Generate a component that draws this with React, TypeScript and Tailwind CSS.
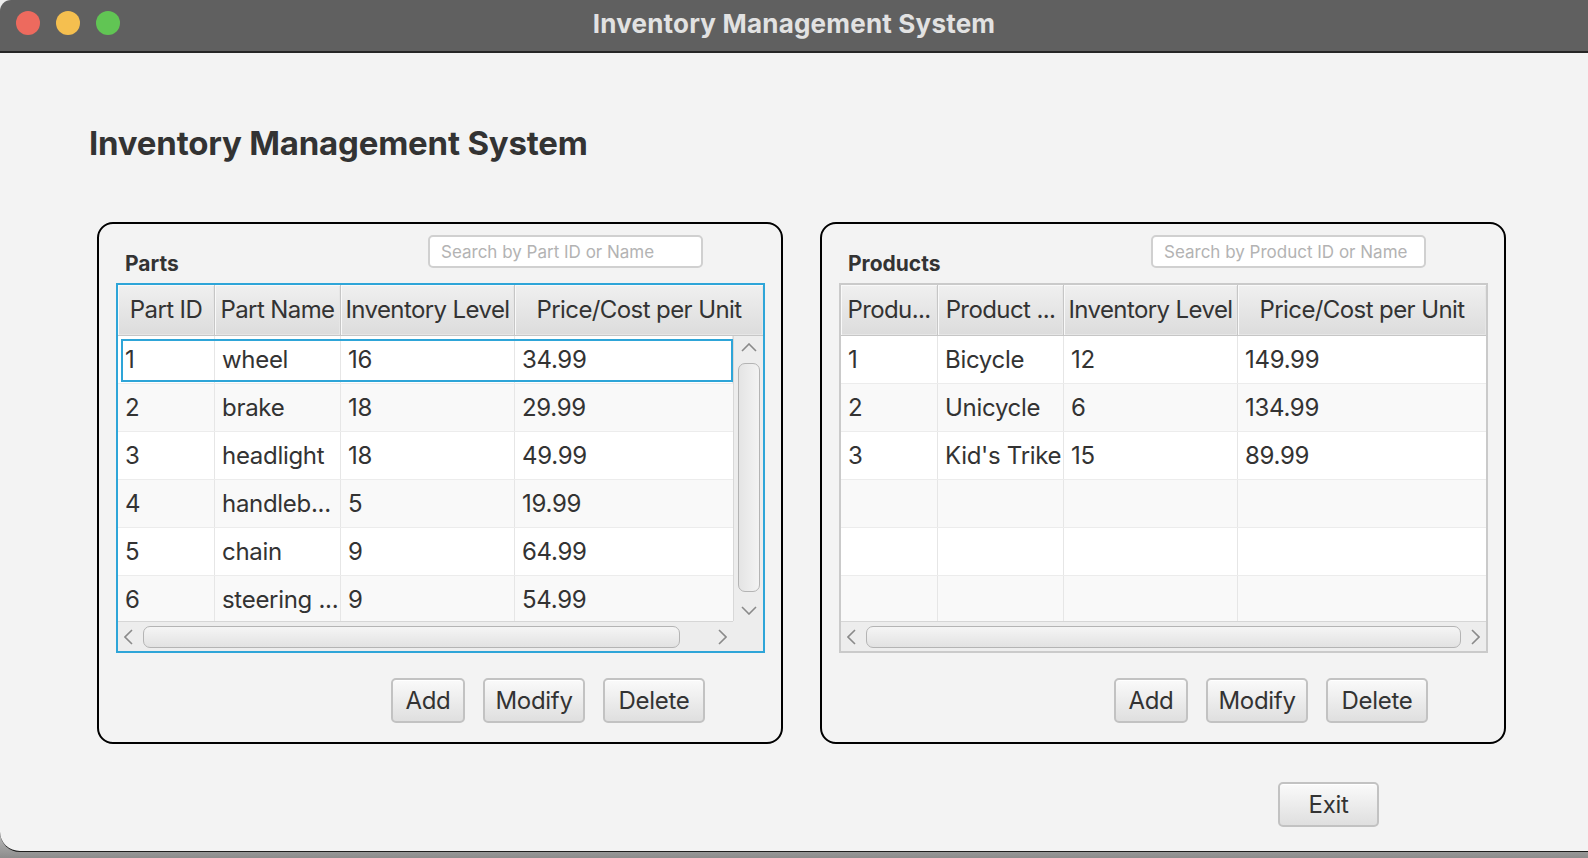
import React from 'react';

const FONT = "font-['Inter','Noto_Sans',sans-serif]";

type Row = string[];

const PARTS: Row[] = [
  ['1', 'wheel', '16', '34.99'],
  ['2', 'brake', '18', '29.99'],
  ['3', 'headlight', '18', '49.99'],
  ['4', 'handleb...', '5', '19.99'],
  ['5', 'chain', '9', '64.99'],
  ['6', 'steering ...', '9', '54.99'],
];

const PRODUCTS: Row[] = [
  ['1', 'Bicycle', '12', '149.99'],
  ['2', 'Unicycle', '6', '134.99'],
  ['3', "Kid's Trike", '15', '89.99'],
  ['', '', '', ''],
  ['', '', '', ''],
  ['', '', '', ''],
];

// fixed column widths, last column takes the rest
const COLS = ['w-[97px]', 'w-[126px]', 'w-[174px]'];

const Chevron = ({ dir }: { dir: 'up' | 'down' | 'left' | 'right' }) => {
  const pts = {
    up: '1,8 8,1 15,8',
    down: '1,1 8,8 15,1',
    left: '8,1 1,8 8,15',
    right: '1,1 8,8 1,15',
  }[dir];
  const vertical = dir === 'up' || dir === 'down';
  return (
    <svg
      width={vertical ? 16 : 9}
      height={vertical ? 9 : 16}
      viewBox={vertical ? '0 0 16 9' : '0 0 9 16'}
      className="shrink-0"
    >
      <polyline points={pts} fill="none" stroke="#8a8a8a" strokeWidth="1.6" />
    </svg>
  );
};

const Button = ({ label, w }: { label: string; w: string }) => (
  <button
    className={`${w} h-[45px] rounded-[5px] border-2 border-[#c2c2c2] bg-gradient-to-b from-[#fafafa] to-[#dfdfdf] text-[24px] leading-none text-[#333333] tracking-[-0.3px] shadow-[inset_0_1px_0_#ffffff]`}
  >
    {label}
  </button>
);

const HScroll = ({ thumb }: { thumb?: string }) => (
  <div className="h-[30px] flex items-center gap-[10px] px-[6px] bg-[#ededed] border-t border-[#d6d6d6]">
    <Chevron dir="left" />
    <div className="flex-1 flex">
      <div
        className={`${thumb ?? 'flex-1'} h-[22px] rounded-[7px] border border-[#b4b4b4] bg-gradient-to-b from-[#f5f5f5] to-[#e2e2e2]`}
      />
    </div>
    <Chevron dir="right" />
  </div>
);

const Table = ({
  headers,
  rows,
  focused,
}: {
  headers: string[];
  rows: Row[];
  focused?: boolean;
}) => (
  <div
    className={`w-[649px] h-[370px] flex flex-col border-2 ${
      focused ? 'border-[#2ea5d8]' : 'border-[#cacaca]'
    } bg-[#f4f4f4]`}
  >
    {/* header */}
    <div className="h-[51px] flex border-b border-[#c6c6c6] shrink-0">
      {headers.map((h, i) => (
        <div
          key={i}
          className={`${i < 3 ? COLS[i] : 'flex-1'} h-full flex items-center justify-center whitespace-nowrap overflow-hidden border-r border-[#c6c6c6] last:border-r-0 bg-gradient-to-b from-[#f0f0f0] to-[#dcdcdc] shadow-[inset_1px_1px_0_#f9f9f9,inset_-1px_-1px_0_#e6e6e6] text-[24px] text-[#333333] tracking-[-0.6px]`}
        >
          {h}
        </div>
      ))}
    </div>

    {/* body */}
    <div className="flex-1 flex min-h-0">
      <div className="flex-1 flex flex-col min-w-0">
        <div className="flex-1 overflow-hidden bg-white">
          {rows.map((r, ri) => (
            <div
              key={ri}
              className={`relative h-[48px] flex shrink-0 border-b border-[#ececec] ${
                ri % 2 === 1 ? 'bg-[#f9f9f9]' : 'bg-white'
              }`}
            >
              {r.map((c, ci) => (
                <div
                  key={ci}
                  className={`${ci < 3 ? COLS[ci] : 'flex-1'} h-full flex items-center pl-[7px] border-r border-[#e6e6e6] last:border-r-0 text-[24px] text-[#333333] whitespace-nowrap overflow-hidden tracking-[-0.3px]`}
                >
                  {c}
                </div>
              ))}
              {focused && ri === 0 && (
                <div className="absolute left-[3px] top-[3px] right-0 bottom-[1px] border-2 border-[#2ea5d8] pointer-events-none" />
              )}
            </div>
          ))}
        </div>
        <HScroll thumb={focused ? 'w-[537px]' : undefined} />
      </div>

      {focused && (
        <div className="w-[30px] flex flex-col shrink-0">
          <div className="flex-1 flex flex-col items-center bg-[#ededed] border-l border-[#d8d8d8] pt-[7px] pb-[6px]">
            <Chevron dir="up" />
            <div className="mt-[11px] w-[22px] h-[229px] rounded-[7px] border border-[#b4b4b4] bg-gradient-to-r from-[#e4e4e4] to-[#f3f3f3]" />
            <div className="mt-auto">
              <Chevron dir="down" />
            </div>
          </div>
          <div className="h-[30px] bg-[#ededed]" />
        </div>
      )}
    </div>
  </div>
);

const Panel = ({
  title,
  search,
  headers,
  rows,
  focused,
}: {
  title: string;
  search: string;
  headers: string[];
  rows: Row[];
  focused?: boolean;
}) => (
  <div className="w-[686px] h-[522px] rounded-[16px] border-2 border-black flex flex-col pt-[11px] pl-[17px] pr-[16px]">
    <div className="h-[48px] flex items-start justify-between pl-[9px] pr-[62px]">
      <span className="mt-[17px] text-[21px] leading-[24px] font-bold text-[#333333]">{title}</span>
      <input
        placeholder={search}
        className={`w-[275px] h-[33px] rounded-[5px] border-2 border-[#d0d0d0] bg-white px-[11px] text-[17px] text-[#333333] placeholder:text-[#b3b3b3] outline-none ${FONT}`}
      />
    </div>
    <Table headers={headers} rows={rows} focused={focused} />
    <div className="mt-[25px] flex justify-end gap-[18px] pr-[60px]">
      <Button label="Add" w="w-[74px]" />
      <Button label="Modify" w="w-[102px]" />
      <Button label="Delete" w="w-[102px]" />
    </div>
  </div>
);

export default function App() {
  return (
    <div
      className={`${FONT} w-[1588px] h-[858px] overflow-hidden flex flex-col bg-[linear-gradient(to_bottom,#ececec_0%,#ececec_94%,#8c8c8c_100%)]`}
    >
      <div className="h-[852px] flex flex-col bg-[#f3f3f3] rounded-tl-[11px] rounded-bl-[20px] border-b border-[#1e1e1e] overflow-hidden">
        {/* title bar */}
        <div className="relative h-[53px] shrink-0 flex items-center justify-center pb-[5px] bg-[#606060] border-b-2 border-[#262626]">
          <div className="absolute left-[16px] top-[11px] flex gap-[16px]">
            <span className="w-[24px] h-[24px] rounded-full bg-[#ed6a5e]" />
            <span className="w-[24px] h-[24px] rounded-full bg-[#f5bf4f]" />
            <span className="w-[24px] h-[24px] rounded-full bg-[#61c554]" />
          </div>
          <span className="text-[26px] font-bold text-[#e2e2e2] tracking-[0.2px]">
            Inventory Management System
          </span>
        </div>

        {/* content */}
        <div className="flex flex-col">
          <h1 className="mt-[70px] ml-[89px] text-[33px] leading-[40px] font-bold text-[#333333] tracking-[-0.2px]">
            Inventory Management System
          </h1>

          <div className="mt-[59px] ml-[97px] flex gap-[37px]">
            <Panel
              title="Parts"
              search="Search by Part ID or Name"
              headers={['Part ID', 'Part Name', 'Inventory Level', 'Price/Cost per Unit']}
              rows={PARTS}
              focused
            />
            <Panel
              title="Products"
              search="Search by Product ID or Name"
              headers={['Produ...', 'Product ...', 'Inventory Level', 'Price/Cost per Unit']}
              rows={PRODUCTS}
            />
          </div>

          <div className="mt-[38px] flex justify-end pr-[209px]">
            <Button label="Exit" w="w-[101px]" />
          </div>
        </div>
      </div>
    </div>
  );
}
